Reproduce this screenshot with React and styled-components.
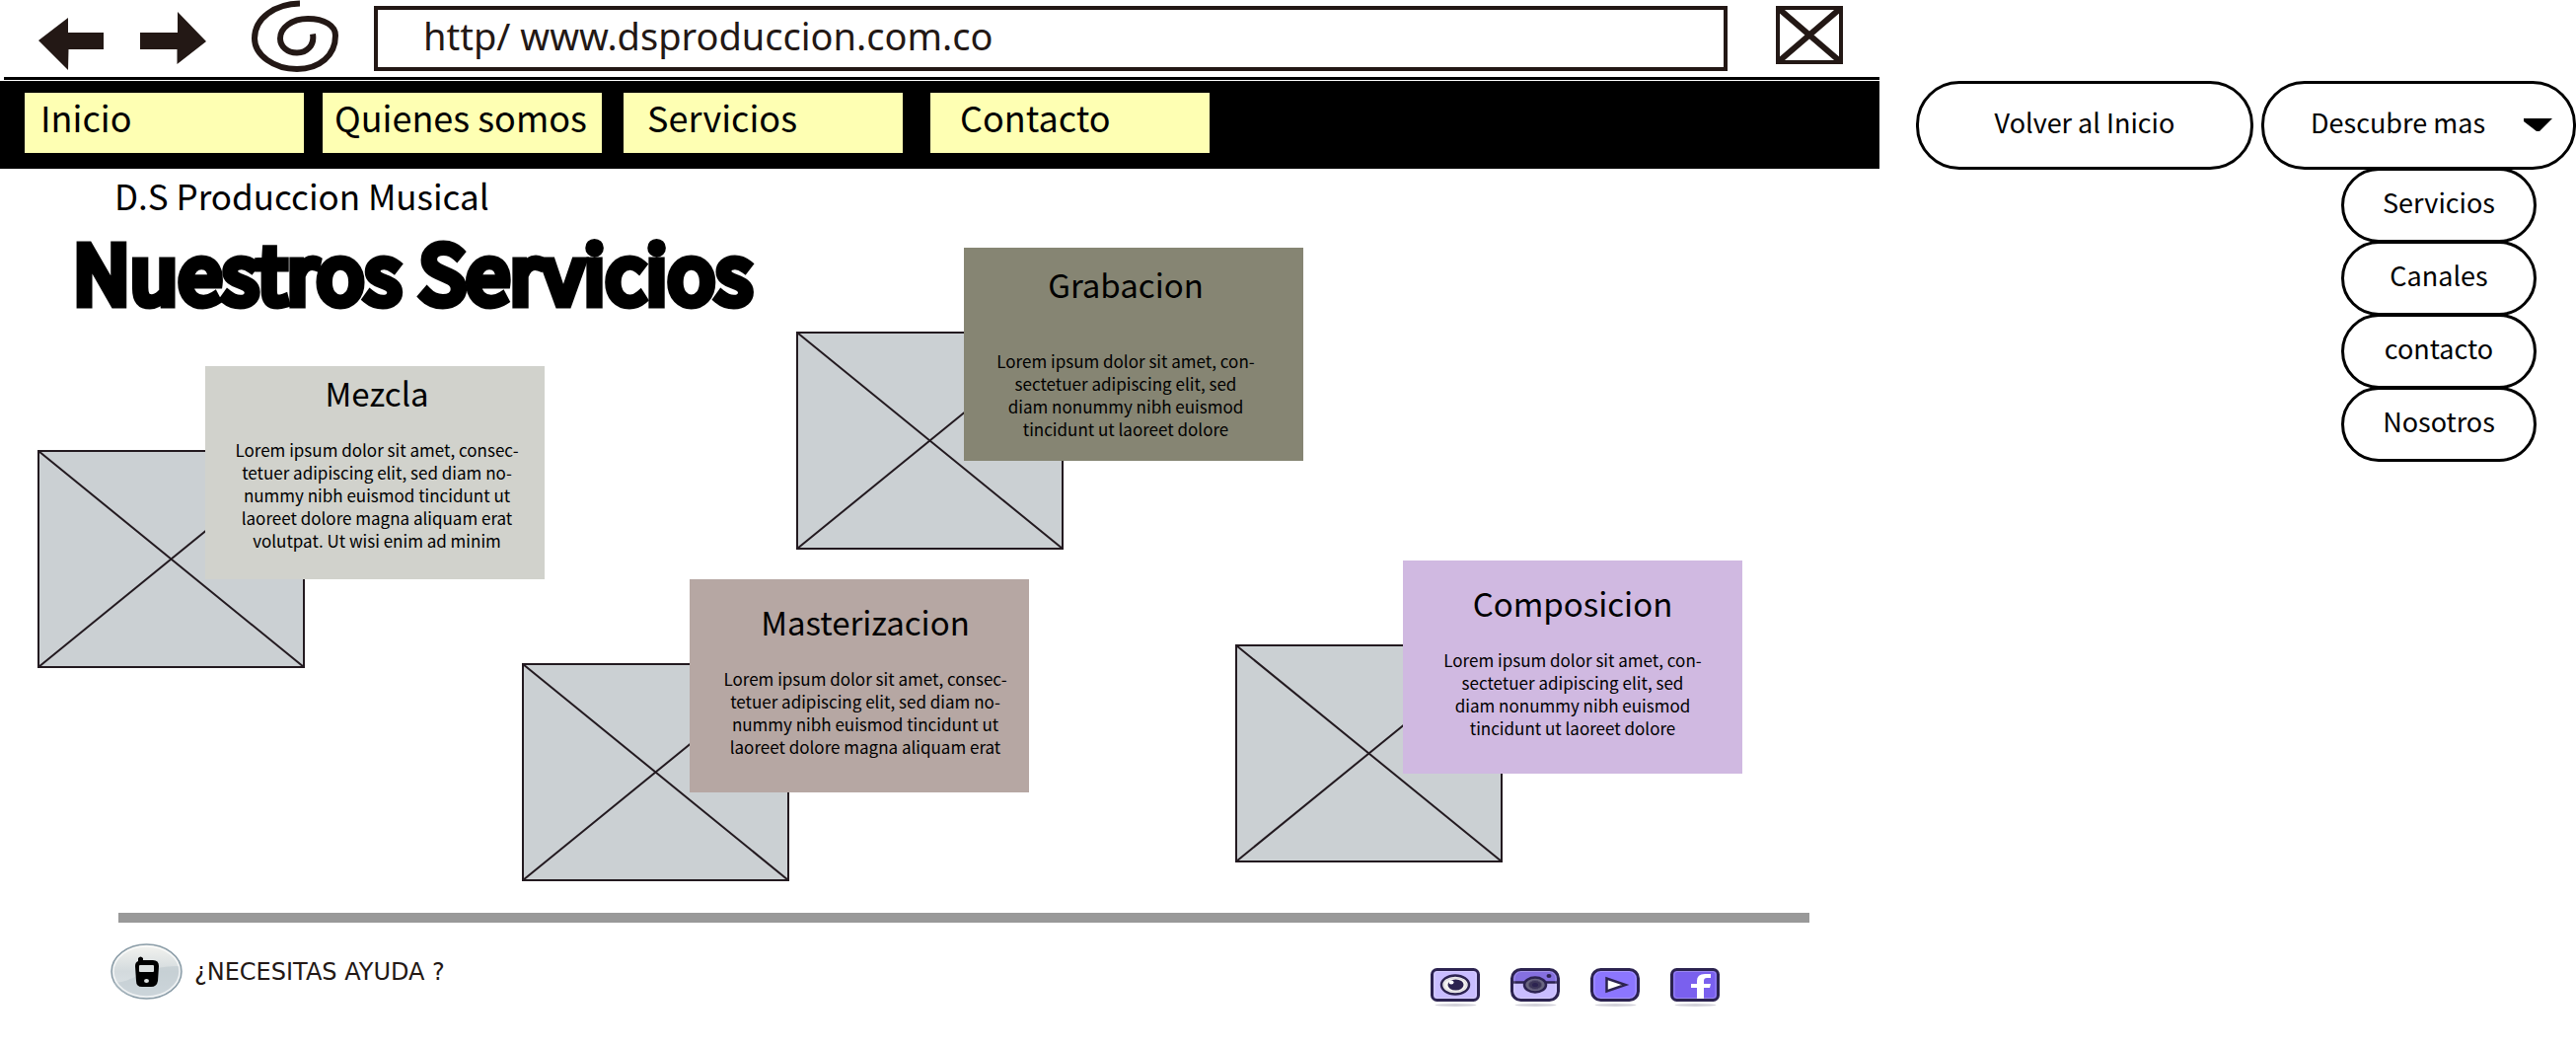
import React from "react";
import styled, { createGlobalStyle } from "styled-components";

const GlobalStyle = createGlobalStyle`
  *, *::before, *::after { box-sizing: border-box; }
  body {
    margin: 0;
    background: #fff;
    color: #000;
    font-family: "Noto Sans CJK SC", "Noto Sans", sans-serif;
  }
  h1, h2, p, ul { margin: 0; padding: 0; font-weight: 400; }
  a { color: inherit; text-decoration: none; }
  button { font: inherit; color: inherit; cursor: pointer; }
`;

const ink = "#231815";

const Page = styled.div`
  display: flex;
  align-items: flex-start;
`;

const Site = styled.div`
  flex: 1;
  min-width: 0;
`;

const BrowserBar = styled.header`
  display: flex;
  align-items: flex-start;
  height: 81px;
  margin-left: 4px;
  padding-left: 35px;
  border-bottom: 3px solid #000;
`;

const IconButton = styled.button`
  display: block;
  padding: 0;
  border: 0;
  background: none;
  margin: ${(p) => p.$margin};
  svg { display: block; }
`;

const Address = styled.input`
  flex: 1;
  min-width: 0;
  height: 66px;
  margin: 6px 49px 0 34px;
  padding: 0 0 6px 46px;
  border: 4px solid ${ink};
  background: #fff;
  color: ${ink};
  font-family: "Noto Sans", sans-serif;
  font-size: 38px;
  outline: none;
`;

const Nav = styled.nav`
  display: flex;
  height: 89px;
  margin-top: 1px;
  padding: 12px 25px 16px;
  background: #000;
`;

const NavLink = styled.a`
  flex: 0 1 283px;
  margin-left: ${(p) => p.$gap}px;
  padding-left: ${(p) => p.$indent}px;
  background: #feffb3;
  font-size: 36px;
  line-height: 49px;
  white-space: nowrap;
`;

const Board = styled.main`
  display: grid;
  grid-template-columns: 491fr 278fr 445fr 653fr;
  grid-template-rows: 80px 120px 197px 19px auto;
  padding-left: 38px;
`;

const Heading = styled.div`
  grid-column: 1 / -1;
  grid-row: 1 / 3;
`;

const Brand = styled.p`
  padding-left: 78px;
  font-size: 35px;
  line-height: 54px;
`;

const Title = styled.h1`
  padding-left: 36px;
  font-size: 80px;
  line-height: 97px;
  white-space: nowrap;
  -webkit-text-stroke: 9px #000;
`;

const Service = styled.article`
  grid-column: ${(p) => p.$column} / -1;
  grid-row: ${(p) => p.$row} / -1;
  justify-self: start;
  align-self: start;
  display: grid;
  grid-template-columns: 170px 101px 243px;
  grid-template-rows: 85px 131px 90px;
`;

const Picture = styled.svg`
  grid-column: 1 / 3;
  grid-row: 2 / 4;
  width: 100%;
  height: 100%;
`;

const Card = styled.div`
  grid-column: 2 / 4;
  grid-row: 1 / 3;
  z-index: 1;
  padding: ${(p) => p.$padding};
  background: ${(p) => p.$color};
  text-align: center;
`;

const CardTitle = styled.h2`
  margin-bottom: ${(p) => p.$space}px;
  font-size: 33px;
  line-height: 44px;
`;

const CardText = styled.p`
  font-size: 17px;
  line-height: 23px;
  white-space: nowrap;
`;

const Footer = styled.footer`
  margin-top: 32px;
`;

const Rule = styled.hr`
  height: 10px;
  margin: 0 71px 0 120px;
  border: 0;
  background: #999;
`;

const FooterRow = styled.div`
  display: flex;
  justify-content: space-between;
  padding: 21px 162px 0 112px;
`;

const Help = styled.a`
  display: flex;
  align-items: center;
  gap: 12px;
  height: 57px;
  color: ${ink};
  font-family: "DejaVu Sans", sans-serif;
  font-size: 24px;
  svg { display: block; }
`;

const Social = styled.div`
  display: flex;
  gap: 31px;
  padding-top: 25px;
  a, svg { display: block; }
`;

const Side = styled.aside`
  display: flex;
  flex: none;
  align-items: flex-start;
  gap: 8px;
  padding: 82px 0 0 37px;
`;

const Pill = styled.button`
  display: flex;
  align-items: center;
  justify-content: ${(p) => (p.$spread ? "space-between" : "center")};
  width: ${(p) => p.$width}px;
  height: 90px;
  padding: ${(p) => (p.$spread ? "0 21px 8px 47px" : "0 0 8px")};
  border: 3px solid #000;
  border-radius: 44px;
  background: #fff;
  font-size: 27px;
  white-space: nowrap;
  svg { margin-top: 6px; }
`;

const Dropdown = styled.div`
  display: flex;
  flex-direction: column;
`;

const Menu = styled.ul`
  align-self: flex-end;
  width: 198px;
  margin-right: 40px;
  list-style: none;
`;

const MenuLink = styled.a`
  display: flex;
  align-items: center;
  justify-content: center;
  height: 76px;
  margin-top: -2px;
  padding-bottom: 8px;
  border: 3px solid #000;
  border-radius: 38px;
  background: #fff;
  font-size: 27px;
`;

const links = [
  { label: "Inicio", gap: 0, indent: 16 },
  { label: "Quienes somos", gap: 19, indent: 12 },
  { label: "Servicios", gap: 22, indent: 24 },
  { label: "Contacto", gap: 28, indent: 30 },
];

const longText = [
  "Lorem ipsum dolor sit amet, consec-",
  "tetuer adipiscing elit, sed diam no-",
  "nummy nibh euismod tincidunt ut",
  "laoreet dolore magna aliquam erat",
  "volutpat. Ut wisi enim ad minim",
];

const shortText = [
  "Lorem ipsum dolor sit amet, con-",
  "sectetuer adipiscing elit, sed",
  "diam nonummy nibh euismod",
  "tincidunt ut laoreet dolore",
];

const services = [
  { name: "Mezcla", column: 1, row: 3, color: "#d1d2cc", padding: "5px 0 0 4px", space: 24, text: longText },
  { name: "Grabacion", column: 3, row: 2, color: "#868573", padding: "15px 16px 0 0", space: 44, text: shortText },
  { name: "Masterizacion", column: 2, row: 5, color: "#b6a7a3", padding: "21px 0 0 12px", space: 24, text: longText.slice(0, 4) },
  { name: "Composicion", column: 4, row: 4, color: "#d0b9e1", padding: "21px 0 0", space: 24, text: shortText },
];

const menuItems = ["Servicios", "Canales", "contacto", "Nosotros"];

function Placeholder() {
  return (
    <Picture viewBox="0 0 271 221" aria-hidden="true">
      <rect x="1" y="1" width="269" height="219" fill="#cbd0d3" stroke="#231a20" strokeWidth="2" />
      <path d="M1 1L270 220M1 220L270 1" stroke="#231a20" strokeWidth="2" />
    </Picture>
  );
}

function PhoneBadge() {
  return (
    <svg width="73" height="57" viewBox="0 0 73 57" aria-hidden="true">
      <defs>
        <linearGradient id="badge" x1="0" y1="0" x2="0" y2="1">
          <stop offset="0" stopColor="#f4f4f0" />
          <stop offset="0.5" stopColor="#d3dadd" />
          <stop offset="1" stopColor="#dfe5ea" />
        </linearGradient>
      </defs>
      <ellipse cx="36.5" cy="28.5" rx="35.5" ry="27.5" fill="url(#badge)" stroke="#8b9da8" strokeWidth="1.5" />
      <path d="M3 40C24 40 34 22 71 23C74 40 56 55 37 55C20 55 8 49 3 40Z" fill="#b9c5cc" opacity="0.5" />
      <ellipse cx="36.5" cy="28.5" rx="33.5" ry="25.5" fill="none" stroke="#fff" strokeWidth="1.5" opacity="0.7" />
      <path
        d="M28 18V15Q30.500 12 33 15V17H43Q49 17 49 23L48 38Q47 44 41 44H32Q26 44 26 38L25 23Q25 19 28 18Z"
        fill="#000"
      />
      <rect x="29" y="22" width="15" height="7" rx="1" fill="#dce0e0" />
      <ellipse cx="36.500" cy="38" rx="2.500" ry="2" fill="#dce0e0" />
    </svg>
  );
}

function SocialIcon({ fill, rx, children }) {
  return (
    <svg width="50" height="39" viewBox="0 0 50 39" aria-hidden="true">
      <ellipse cx="25.500" cy="37.500" rx="21" ry="1.500" fill="#d3d2da" />
      <rect x="1.500" y="1.500" width="47" height="31" rx={rx} fill={fill} />
      {children}
      <rect x="4" y="3.500" width="42" height="27" rx={rx - 2} fill="none" stroke="#fff" strokeOpacity="0.25" />
      <rect x="1.500" y="1.500" width="47" height="31" rx={rx} fill="none" stroke="#2c2350" strokeWidth="3" />
    </svg>
  );
}

const socials = [
  {
    label: "Visitas",
    icon: (
      <SocialIcon fill="#c9bdff" rx={5}>
        <ellipse cx="25" cy="17" rx="14" ry="9.500" fill="#f4f3f1" stroke="#2c2350" strokeWidth="2.500" />
        <ellipse cx="25" cy="17" rx="11.500" ry="7" fill="none" stroke="#d8d6dc" />
        <ellipse cx="25.500" cy="17" rx="8" ry="5.500" fill="#2c2350" />
        <ellipse cx="21" cy="14.500" rx="2.500" ry="2" fill="#fff" />
      </SocialIcon>
    ),
  },
  {
    label: "Instagram",
    icon: (
      <SocialIcon fill="#c9bdff" rx={9}>
        <path d="M2 14V10Q3 2 11 2H39Q48 2 48 10V14Z" fill="#8570e0" />
        <path d="M2 14.500H48" stroke="#2c2350" strokeWidth="2.500" />
        <ellipse cx="25" cy="17" rx="11" ry="7.500" fill="#6a6680" stroke="#2c2350" strokeWidth="2.500" />
        <ellipse cx="25" cy="17" rx="6.500" ry="4.500" fill="#3c3558" stroke="#575172" />
        <ellipse cx="25" cy="17" rx="3" ry="2" fill="#2c2350" />
        <ellipse cx="39" cy="8" rx="2.500" ry="2" fill="#2c2350" />
      </SocialIcon>
    ),
  },
  {
    label: "YouTube",
    icon: (
      <SocialIcon fill="#8c76ff" rx={9}>
        <path d="M16.500 10.500V23.500L35.500 17Z" fill="#fff" stroke="#2c2350" strokeWidth="2.500" />
      </SocialIcon>
    ),
  },
  {
    label: "Facebook",
    icon: (
      <SocialIcon fill="#7a60ee" rx={5}>
        <path d="M27 31V20H21V16H27V13Q27 6 35 6H41V10H37Q34 10 34 13V16H41L40 20H34V31Z" fill="#fff" />
      </SocialIcon>
    ),
  },
];

export default function App() {
  return (
    <>
      <GlobalStyle />
      <Page>
        <Site>
          <BrowserBar>
            <IconButton $margin="18px 37px 0 0" aria-label="Atras">
              <svg width="66" height="53" viewBox="0 0 66 53">
                <path d="M0 23L30 0V15H66V32H30.500L30 53Z" fill={ink} />
              </svg>
            </IconButton>
            <IconButton $margin="12px 46px 0 0" aria-label="Adelante">
              <svg width="67" height="53" viewBox="0 0 67 53">
                <path d="M67 30L38 0V21H0V38H37.500V53Z" fill={ink} />
              </svg>
            </IconButton>
            <IconButton $margin="0" aria-label="Recargar">
              <svg width="90" height="74" viewBox="0 0 90 74" fill="none" stroke={ink} strokeWidth="6">
                <path d="M49 3.500C24 4 3 18 3 39C3 56 23 70 46 70C69 70 85 56 85 36C85 26 74 19 57 19C41 19 29 28 29 39C29 47 36 53.500 46 53.500C56 53.500 64 46 62 34.500" />
              </svg>
            </IconButton>
            <Address aria-label="Direccion" type="text" defaultValue="http/ www.dsproduccion.com.co" />
            <IconButton $margin="6px 37px 0 0" aria-label="Cerrar">
              <svg width="68" height="59" viewBox="0 0 68 59" fill="none" stroke={ink} strokeWidth="4">
                <rect x="2" y="2" width="64" height="55" />
                <path d="M2 2L66 57M66 2L2 57" strokeWidth="6" />
              </svg>
            </IconButton>
          </BrowserBar>

          <Nav>
            {links.map((l) => (
              <NavLink key={l.label} href="#" $gap={l.gap} $indent={l.indent}>
                {l.label}
              </NavLink>
            ))}
          </Nav>

          <Board>
            <Heading>
              <Brand>D.S Produccion Musical</Brand>
              <Title>Nuestros Servicios</Title>
            </Heading>
            {services.map((s) => (
              <Service key={s.name} $column={s.column} $row={s.row}>
                <Placeholder />
                <Card $color={s.color} $padding={s.padding}>
                  <CardTitle $space={s.space}>{s.name}</CardTitle>
                  <CardText>
                    {s.text.map((line) => (
                      <React.Fragment key={line}>
                        {line}
                        <br />
                      </React.Fragment>
                    ))}
                  </CardText>
                </Card>
              </Service>
            ))}
          </Board>

          <Footer>
            <Rule />
            <FooterRow>
              <Help href="#">
                <PhoneBadge />
                ¿NECESITAS AYUDA ?
              </Help>
              <Social>
                {socials.map((s) => (
                  <a key={s.label} href="#" aria-label={s.label}>
                    {s.icon}
                  </a>
                ))}
              </Social>
            </FooterRow>
          </Footer>
        </Site>

        <Side>
          <Pill $width={342}>Volver al Inicio</Pill>
          <Dropdown>
            <Pill $width={319} $spread aria-expanded="true">
              Descubre mas
              <svg width="29" height="13" viewBox="0 0 29 13" aria-hidden="true">
                <path d="M0 0H29L16 13H13L0 3Z" />
              </svg>
            </Pill>
            <Menu>
              {menuItems.map((m) => (
                <li key={m}>
                  <MenuLink href="#">{m}</MenuLink>
                </li>
              ))}
            </Menu>
          </Dropdown>
        </Side>
      </Page>
    </>
  );
}
